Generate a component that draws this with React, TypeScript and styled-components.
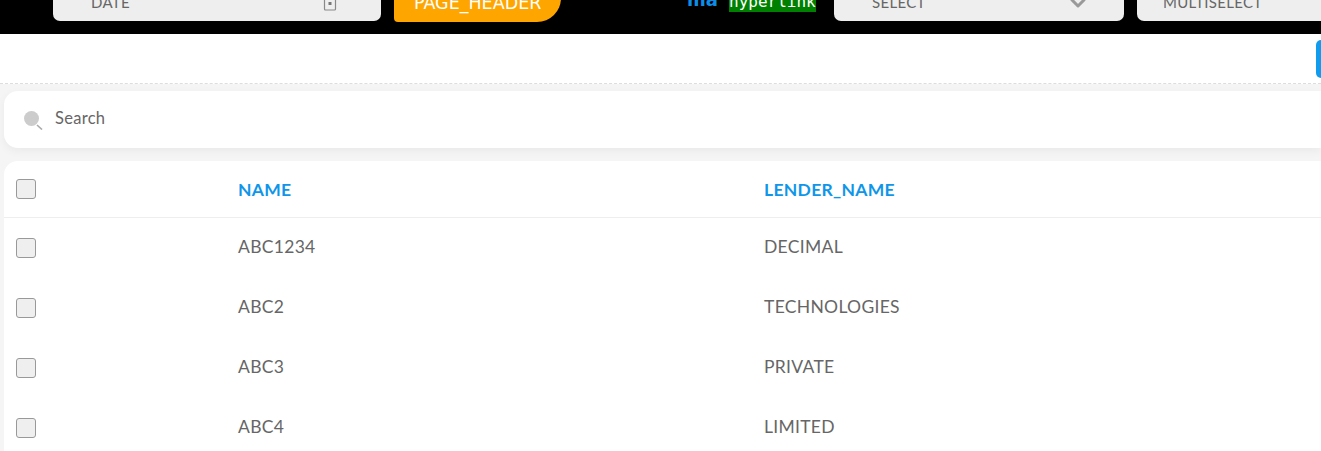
import React from "react";
import styled, { createGlobalStyle } from "styled-components";
import { ChevronDown } from "lucide-react";

const GlobalStyle = createGlobalStyle`
  html, body {
    margin: 0;
    height: 100%;
    overflow: hidden;
    background: #f5f5f5;
    font-family: "Lato", "Liberation Sans", sans-serif;
  }
`;

const Page = styled.div`
  width: 1321px;
  height: 451px;
  overflow: hidden;
`;

const TopBar = styled.div`
  display: flex;
  align-items: flex-end;
  height: 34px;
  overflow: hidden;
  background: #000;
  padding: 0 0 13px 53px;
  box-sizing: border-box;
`;

const Field = styled.div<{ $width: number; $gap: number; $inset?: number }>`
  display: flex;
  flex: none;
  align-items: center;
  justify-content: space-between;
  box-sizing: border-box;
  width: ${(p) => p.$width}px;
  height: 38px;
  margin-left: ${(p) => p.$gap}px;
  padding: 0 44px 0 ${(p) => p.$inset ?? 38}px;
  border-radius: 7px;
  background: #eee;
  color: #666;
  font-size: 15px;
  letter-spacing: 0.3px;
`;

const HeaderButton = styled.div`
  flex: none;
  box-sizing: border-box;
  width: 167px;
  height: 34px;
  margin-left: 13px;
  margin-bottom: -1px;
  padding-left: 20px;
  border-radius: 4px 0 24px 4px;
  background: #ffa500;
  color: #fff;
  font-family: "DejaVu Sans", sans-serif;
  font-size: 17.5px;
  line-height: 30px;
`;

const BlueLabel = styled.span`
  flex: none;
  margin-left: 126px;
  margin-bottom: 11px;
  width: 42px;
  color: #0c8ee6;
  font-family: "DejaVu Sans", sans-serif;
  font-size: 18px;
  font-weight: 700;
  line-height: 20px;
`;

const HyperLink = styled.span`
  flex: none;
  width: 87px;
  height: 20px;
  margin-bottom: 9px;
  background: #008000;
  color: #fff;
  font-family: "DejaVu Sans Mono", monospace;
  font-size: 16px;
  line-height: 20px;
`;

const SelectChevron = styled(ChevronDown)`
  margin: 2px -10px 0 0;
`;

const DateGlyph = styled.svg`
  margin-top: 4px;
`;

const ToolBar = styled.div`
  display: flex;
  justify-content: flex-end;
  align-items: center;
  height: 49px;
  overflow: hidden;
  background: #fff;
  border-bottom: 1px dashed #ddd;
`;

const AddButton = styled.div`
  flex: none;
  width: 5px;
  height: 38px;
  border-radius: 6px 0 0 6px;
  background: #0f9bee;
`;

const Content = styled.div`
  display: flex;
  flex-direction: column;
  gap: 13px;
  padding: 7px 0 0 4px;
`;

const SearchCard = styled.div`
  display: flex;
  align-items: center;
  gap: 12px;
  height: 57px;
  padding-left: 19px;
  border-radius: 14px 0 0 14px;
  background: #fff;
  box-shadow: 0 3px 10px rgba(0, 0, 0, 0.05);
  color: #666;
  font-size: 16.5px;
  letter-spacing: 0.3px;
`;

const SearchLabel = styled.span`
  margin-bottom: 3px;
`;

const TableCard = styled.div`
  border-radius: 14px 0 0 0;
  background: #fff;
`;

const Row = styled.div<{ $header?: boolean }>`
  display: grid;
  grid-template-columns: 234px 526px 1fr;
  align-items: center;
  height: ${(p) => (p.$header ? "57px" : "60px")};
  box-sizing: border-box;
  border-bottom: ${(p) => (p.$header ? "1px solid #eee" : "0")};
  color: ${(p) => (p.$header ? "#0f96ea" : "#666")};
  font-size: 17.5px;
  font-weight: ${(p) => (p.$header ? 700 : 400)};
  letter-spacing: 0.3px;
`;

const Cell = styled.span`
  margin-bottom: 3px;
`;

const HeadCell = styled.span``;

const CheckCell = styled.div`
  padding-left: 12px;
`;

const Check = styled.div`
  width: 20px;
  height: 20px;
  box-sizing: border-box;
  border: 1px solid #999;
  border-radius: 3px;
  background: #efefef;
`;

const rows = [
  ["ABC1234", "DECIMAL"],
  ["ABC2", "TECHNOLOGIES"],
  ["ABC3", "PRIVATE"],
  ["ABC4", "LIMITED"],
];

const DateIcon = () => (
  <DateGlyph width="14" height="14" viewBox="0 0 14 14" fill="none">
    <rect x="1.5" y="1" width="11" height="12" rx="1" stroke="#888" strokeWidth="1.2" />
    <rect x="5.5" y="5" width="3" height="3" fill="#777" />
  </DateGlyph>
);

const SearchIcon = () => (
  <svg width="20" height="20" viewBox="0 0 20 20">
    <circle cx="8.5" cy="8.5" r="7.5" fill="#ccc" />
    <path d="M14 15l5 4.5" stroke="#aaa" strokeWidth="1.6" />
  </svg>
);

const App: React.FC = () => {
  return (
    <Page>
      <GlobalStyle />
      <TopBar>
        <Field $width={328} $gap={0}>
          DATE
          <DateIcon />
        </Field>
        <HeaderButton>PAGE_HEADER</HeaderButton>
        <BlueLabel>ma</BlueLabel>
        <HyperLink>hyperlink</HyperLink>
        <Field $width={290} $gap={18}>
          SELECT
          <SelectChevron size={24} color="#999" strokeWidth={3} />
        </Field>
        <Field $width={240} $gap={13} $inset={26}>
          MULTISELECT
        </Field>
      </TopBar>
      <ToolBar>
        <AddButton />
      </ToolBar>
      <Content>
        <SearchCard>
          <SearchIcon />
          <SearchLabel>Search</SearchLabel>
        </SearchCard>
        <TableCard>
          <Row $header>
            <CheckCell>
              <Check />
            </CheckCell>
            <HeadCell>NAME</HeadCell>
            <HeadCell>LENDER_NAME</HeadCell>
          </Row>
          {rows.map(([name, lender]) => (
            <Row key={name}>
              <CheckCell>
                <Check />
              </CheckCell>
              <Cell>{name}</Cell>
              <Cell>{lender}</Cell>
            </Row>
          ))}
        </TableCard>
      </Content>
    </Page>
  );
};

export default App;
